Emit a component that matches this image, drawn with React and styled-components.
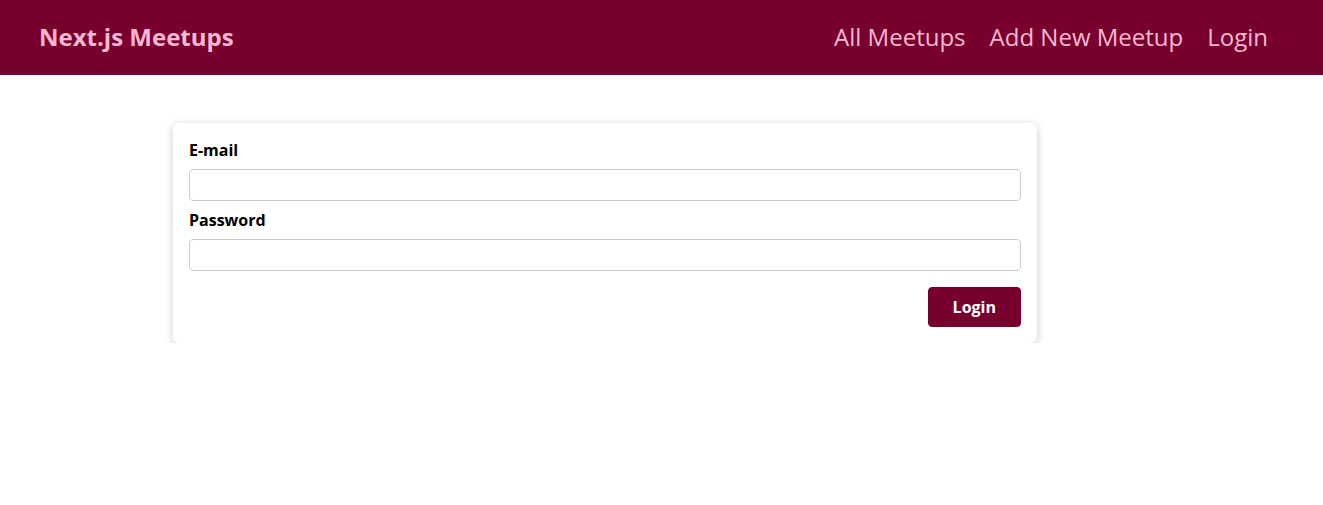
import React from "react";
import styled, { createGlobalStyle } from "styled-components";

const GlobalStyle = createGlobalStyle`
  * { box-sizing: border-box; }
  body {
    margin: 0;
    font-family: "Open Sans", "Noto Sans", sans-serif;
    background: #fff;
  }
`;

const Header = styled.header`
  height: 75px;
  background: #77002e;
  display: flex;
  align-items: center;
  justify-content: space-between;
  padding: 0 55px 2px 39px;
`;

const Logo = styled.div`
  font-size: 24px;
  font-weight: 700;
  color: #fcb8d2;
`;

const NavList = styled.ul`
  list-style: none;
  margin: 0;
  padding: 0;
  display: flex;
  gap: 24px;
`;

const NavLink = styled.a`
  font-size: 24px;
  color: #fcb8d2;
  text-decoration: none;
  cursor: pointer;
`;

const Main = styled.main`
  margin: 48px 0 0 173px;
  width: 864px;
`;

const Card = styled.div`
  background: #fff;
  border-radius: 6px;
  box-shadow: 0 2px 8px rgba(0, 0, 0, 0.22);
  padding: 16px;
`;

const Field = styled.div`
  margin-bottom: ${({ last }) => (last ? "0" : "8px")};
`;

const Label = styled.label`
  display: block;
  font-weight: 700;
  font-size: 16px;
  line-height: 22px;
  margin-bottom: 8px;
  color: #000;
`;

const Input = styled.input`
  display: block;
  width: 100%;
  height: 32px;
  border: 1px solid #ccc;
  border-radius: 4px;
  font: inherit;
  padding: 4px 6px;
`;

const Actions = styled.div`
  display: flex;
  justify-content: flex-end;
  margin-top: 16px;
`;

const Button = styled.button`
  height: 40px;
  padding: 0 24px;
  font: inherit;
  font-weight: 700;
  font-size: 16px;
  color: #fff;
  background: #77002e;
  border: 1px solid #77002e;
  border-radius: 4px;
  cursor: pointer;
`;

export default function App() {
  return (
    <>
      <GlobalStyle />
      <Header>
        <Logo>Next.js Meetups</Logo>
        <nav>
          <NavList>
            <li><NavLink>All Meetups</NavLink></li>
            <li><NavLink>Add New Meetup</NavLink></li>
            <li><NavLink>Login</NavLink></li>
          </NavList>
        </nav>
      </Header>
      <Main>
        <Card>
          <form onSubmit={(e) => e.preventDefault()}>
            <Field>
              <Label htmlFor="email">E-mail</Label>
              <Input id="email" type="email" />
            </Field>
            <Field last>
              <Label htmlFor="password">Password</Label>
              <Input id="password" type="password" />
            </Field>
            <Actions>
              <Button type="submit">Login</Button>
            </Actions>
          </form>
        </Card>
      </Main>
    </>
  );
}
